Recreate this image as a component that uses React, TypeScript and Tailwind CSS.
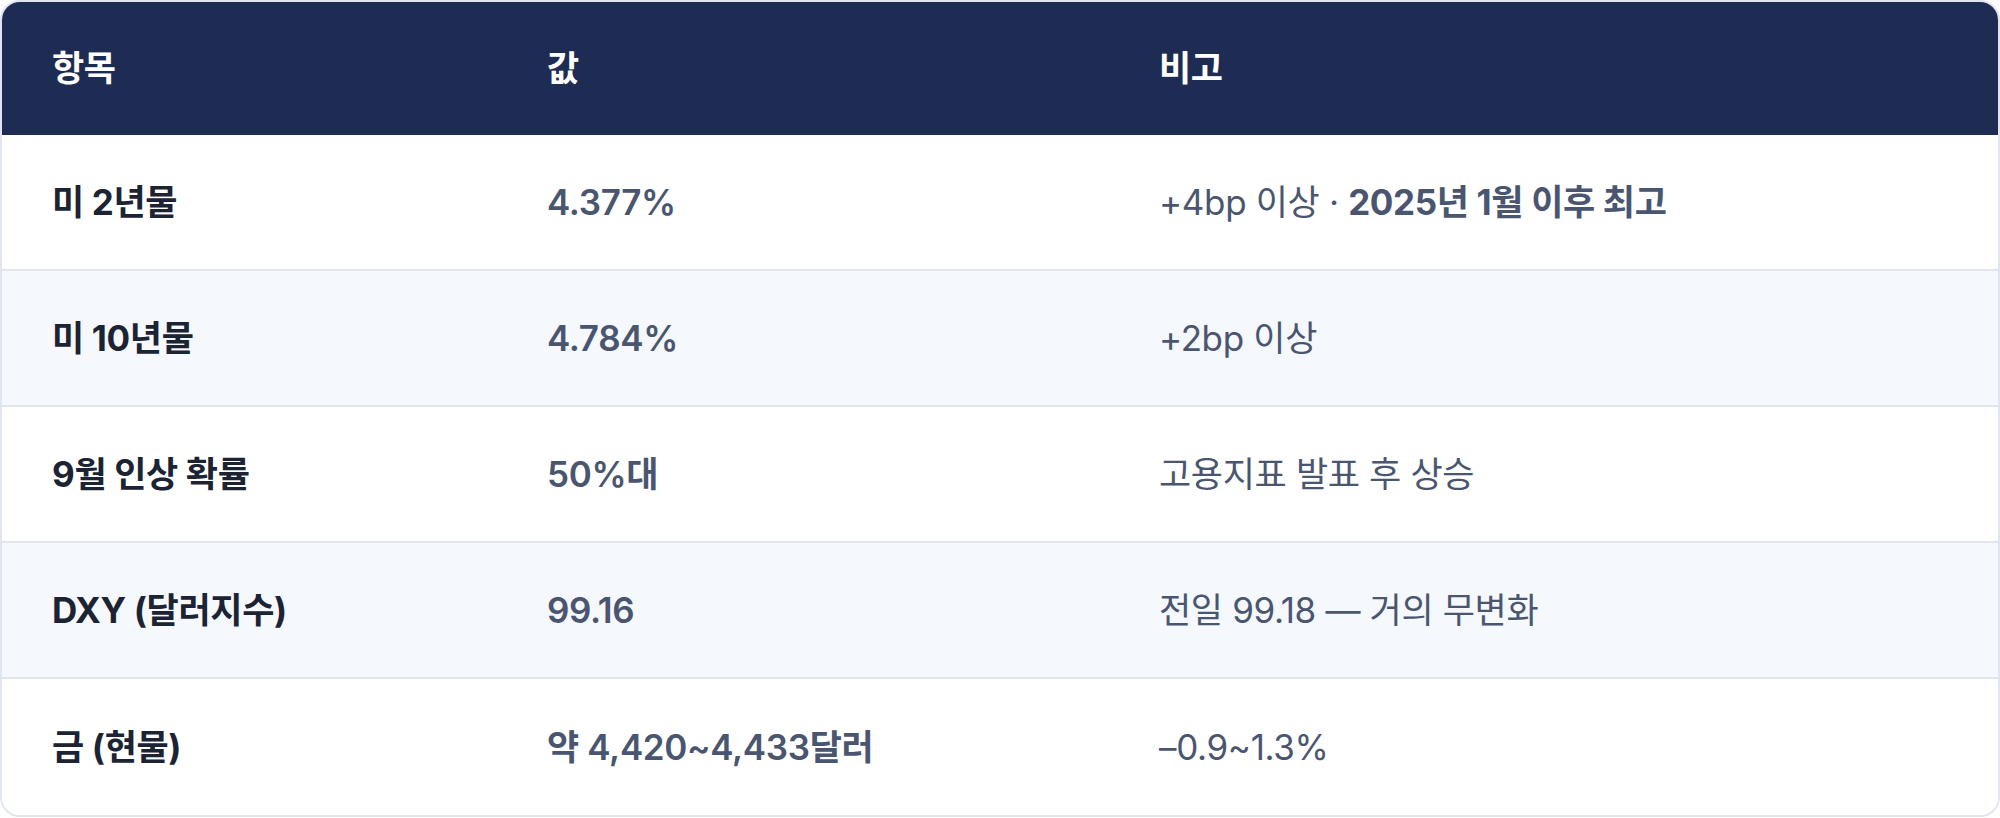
import React from "react";

interface Row {
  item: string;
  value: string;
  note: React.ReactNode;
}

const ROWS: Row[] = [
  {
    item: "미 2년물",
    value: "4.377%",
    note: (
      <>
        +4bp 이상 · <span className="font-bold">2025년 1월 이후 최고</span>
      </>
    ),
  },
  { item: "미 10년물", value: "4.784%", note: "+2bp 이상" },
  { item: "9월 인상 확률", value: "50%대", note: "고용지표 발표 후 상승" },
  { item: "DXY (달러지수)", value: "99.16", note: "전일 99.18 — 거의 무변화" },
  { item: "금 (현물)", value: "약 4,420~4,433달러", note: "–0.9~1.3%" },
];

export default function App() {
  return (
    <div className="w-[2000px] h-[818px] bg-white font-['Inter','Noto_Sans_CJK_KR',sans-serif]">
      <div className="h-[817px] rounded-[20px] border-2 border-[#dfe5f1] overflow-hidden">
        {/* Header */}
        <div className="grid grid-cols-[495px_612px_1fr] h-[133px] items-center bg-[#1e2b53] text-white text-[35px] font-bold tracking-[-0.01em]">
          <div className="px-[50px]">항목</div>
          <div className="px-[50px]">값</div>
          <div className="px-[50px]">비고</div>
        </div>

        {/* Body rows */}
        {ROWS.map((row, i) => (
          <div
            key={row.item}
            className={`grid grid-cols-[495px_612px_1fr] items-center text-[35px] tracking-[-0.01em] ${
              i % 2 === 1 ? "bg-[#f5f8fd]" : "bg-white"
            } ${i < ROWS.length - 1 ? "h-[136px] border-b-2 border-[#dfe5f1]" : "h-[136px]"}`}
          >
            <div className="px-[50px] font-bold text-[#1c2333]">{row.item}</div>
            <div className="px-[50px] font-semibold text-[#4a5570]">{row.value}</div>
            <div className="px-[50px] text-[#4a5570]">{row.note}</div>
          </div>
        ))}
      </div>
    </div>
  );
}
